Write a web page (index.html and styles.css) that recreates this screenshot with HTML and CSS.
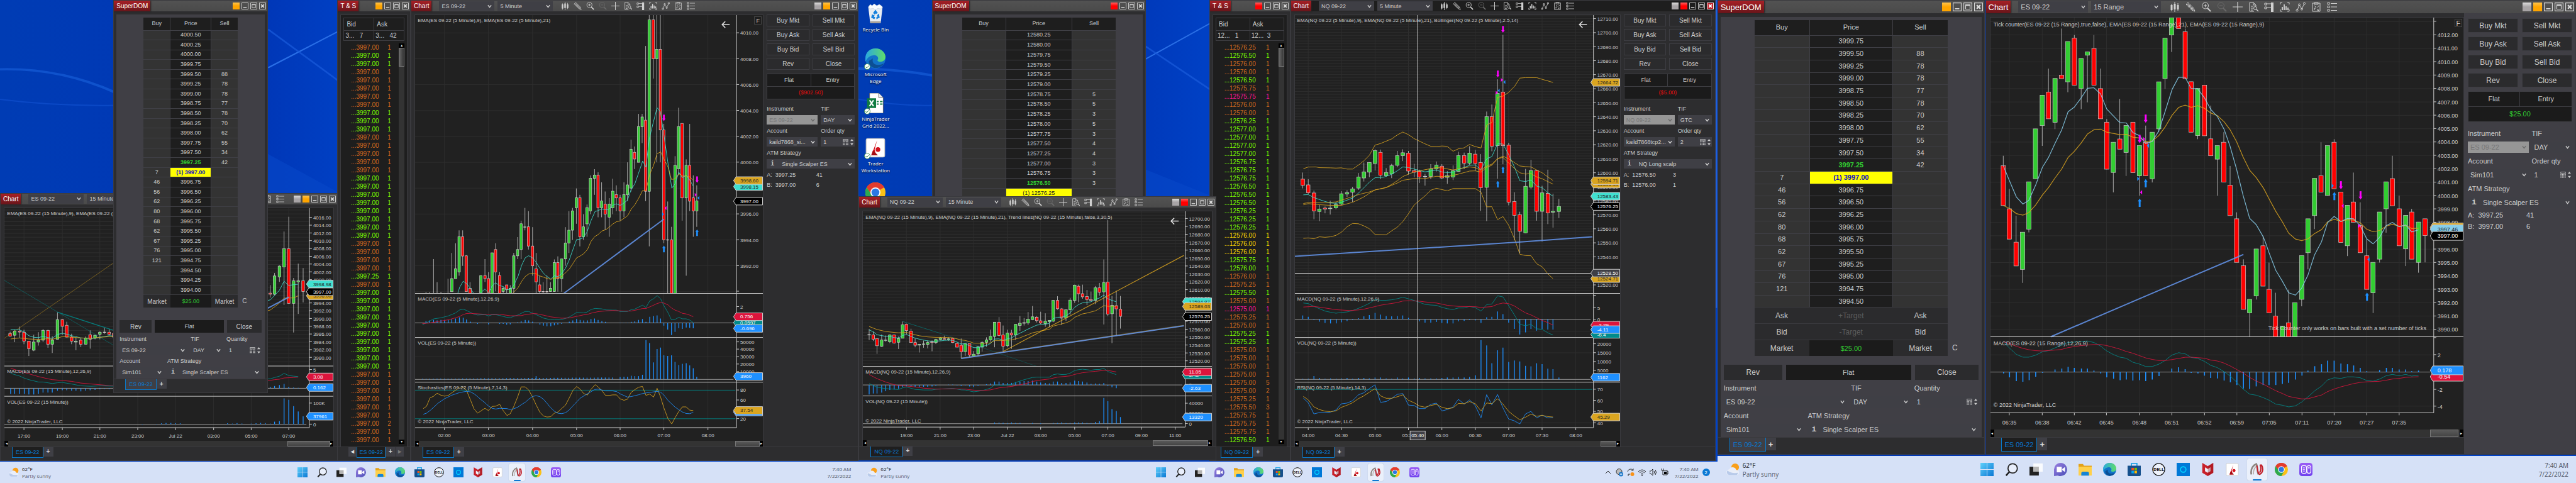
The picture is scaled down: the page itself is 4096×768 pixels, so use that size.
FILE: index.html
```html
<!DOCTYPE html>
<html lang="en">
<head>
<meta charset="utf-8">
<title>Trading desktop</title>
<link rel="stylesheet" href="styles.css">
</head>
<body>
<svg class="defs" aria-hidden="true">
  <defs>
    <linearGradient id="g-win" x1="0" y1="0" x2="1" y2="1"><stop offset="0" stop-color="#5fd0fb"/><stop offset="1" stop-color="#0a78d4"/></linearGradient>
    <linearGradient id="g-edge" x1="0" y1="0" x2="1" y2="0"><stop offset="0" stop-color="#2aa8e0"/><stop offset="1" stop-color="#5fdc6a"/></linearGradient>
    <linearGradient id="g-chat" x1="0" y1="0" x2="1" y2="1"><stop offset="0" stop-color="#9a7fe0"/><stop offset="1" stop-color="#4b50b8"/></linearGradient>
    <linearGradient id="g-app" x1="0" y1="0" x2="0" y2="1"><stop offset="0" stop-color="#9a5cf5"/><stop offset="1" stop-color="#6f42ee"/></linearGradient>
    <linearGradient id="g-streak" x1="0" y1="0" x2="1" y2="0"><stop offset="0" stop-color="#2f78f0" stop-opacity="0.9"/><stop offset="1" stop-color="#2f78f0" stop-opacity="0.25"/></linearGradient>
  </defs>
  <symbol id="i-candles" viewBox="0 0 16 16"><path d="M3 3v12M8 0v16M13 2v12" stroke="currentColor"/><path d="M1.500 5h3v8h-3zM6.500 3h3v9h-3zM11.500 5h3v7h-3z" fill="currentColor"/></symbol>
  <symbol id="i-pencil" viewBox="0 0 16 16"><path d="M2 3l2-2 9 9 2 5-5-2-9-9zM4 3l9 9M3 4l9 9" fill="none" stroke="currentColor"/></symbol>
  <symbol id="i-zoomin" viewBox="0 0 16 16"><circle cx="6.500" cy="6" r="5" fill="none" stroke="currentColor"/><path d="M4 6h5M6.500 3.500v5" stroke="currentColor"/><path d="M10 10l5 5" stroke="currentColor" stroke-width="2"/></symbol>
  <symbol id="i-zoomout" viewBox="0 0 16 16"><circle cx="6.500" cy="6" r="5" fill="none" stroke="currentColor"/><path d="M4 6h5" stroke="currentColor"/><path d="M10 10l5 5" stroke="currentColor" stroke-width="2"/></symbol>
  <symbol id="i-cross" viewBox="0 0 16 16"><path d="M0 8h16M8 0v16" stroke="currentColor" stroke-width="1.200"/></symbol>
  <symbol id="i-doc" viewBox="0 0 16 16"><path d="M9 15H2V1h6l4 4v2M8 1v4h4M4 7h4M4 10h3M4 13h3" fill="none" stroke="currentColor"/><circle cx="11" cy="10" r="2.500" fill="none" stroke="currentColor"/><path d="M13 12l3 3" stroke="currentColor" stroke-width="1.500"/></symbol>
  <symbol id="i-trader" viewBox="0 0 16 16"><path d="M1 2h3v3H1zM1 8h3v3H1zM4 3h7M4 9h7" fill="none" stroke="currentColor"/><path d="M11 1h4v15h-4z" fill="currentColor"/></symbol>
  <symbol id="i-bars" viewBox="0 0 16 16"><path d="M4 1H1v3M12 1h3v3M4 15H1v-3M12 15h3v-3" fill="none" stroke="currentColor"/><path d="M4 13V8M7 13V4M10 13V7M13 13V9" stroke="currentColor" stroke-width="1.800"/></symbol>
  <symbol id="i-zig" viewBox="0 0 16 16"><path d="M3 13L6 5l4 6 4-8" fill="none" stroke="currentColor"/><circle cx="2.500" cy="13.500" r="1.500" fill="none" stroke="currentColor"/><circle cx="6" cy="4.500" r="1.500" fill="none" stroke="currentColor"/><circle cx="10" cy="11.500" r="1.500" fill="none" stroke="currentColor"/><circle cx="14" cy="2.500" r="1.500" fill="none" stroke="currentColor"/></symbol>
  <symbol id="i-clip" viewBox="0 0 16 16"><path d="M2 2h12v13H2zM5 1h6v3H5zM5 6l3 3M10 9l2-3M5 13v-3h2M9 11l3 3M12 11l-3 3" fill="none" stroke="currentColor"/></symbol>
  <symbol id="i-list" viewBox="0 0 16 16"><path d="M1 1h3v3H1zM1 6.500h3v3H1zM1 12h3v3H1zM6 2.500h10M6 8h10M6 13.500h10" fill="none" stroke="currentColor"/></symbol>
  <symbol id="i-min" viewBox="0 0 12 12"><path d="M.5.5h11v11H.5z" fill="none" stroke="currentColor"/><path d="M3 8.500h6" stroke="currentColor" stroke-width="1.500"/></symbol>
  <symbol id="i-max" viewBox="0 0 12 12"><path d="M.5.5h11v11H.5zM3 3h6v6H3zM3 4h6" fill="none" stroke="currentColor"/></symbol>
  <symbol id="i-close" viewBox="0 0 12 12"><path d="M.5.5h11v11H.5z" fill="none" stroke="currentColor"/><path d="M3.500 3.500l5 5M8.500 3.500l-5 5" stroke="currentColor" stroke-width="2"/></symbol>
  <symbol id="i-chev" viewBox="0 0 8 6"><path d="M1 1l3 4 3-4" fill="none" stroke="currentColor" stroke-width="1.500"/></symbol>
  <symbol id="i-calc" viewBox="0 0 10 12"><path d="M.5.5h9v3h-9z" fill="none" stroke="currentColor"/><path d="M0 5.500h10M0 8h10M0 10.500h10" stroke="currentColor" stroke-width="1.800" stroke-dasharray="1.600 1.200"/></symbol>
  <symbol id="i-spin" viewBox="0 0 6 12"><path d="M0 4l3-4 3 4zM0 8l3 4 3-4z" fill="currentColor"/></symbol>

  <symbol id="t-start" viewBox="0 0 24 24"><path d="M0 0h11.500v11.500H0zM12.500 0H24v11.500H12.500zM0 12.500h11.500V24H0zM12.500 12.500H24V24H12.500z" fill="url(#g-win)"/></symbol>
  <symbol id="t-search" viewBox="0 0 24 24"><circle cx="14" cy="10" r="8.500" fill="#e8eefb" stroke="#222" stroke-width="2"/><path d="M8 16.500L2 23" stroke="#222" stroke-width="3"/></symbol>
  <symbol id="t-view" viewBox="0 0 24 24"><path d="M0 7h17v16H0z" fill="#222"/><path d="M7 1h17v15H7z" fill="#fff" opacity=".85"/><path d="M7 7h10v9H7z" fill="#b5b5b5"/></symbol>
  <symbol id="t-chat" viewBox="0 0 24 24"><path d="M12 0a12 12 0 1 1-5 23L0 24V12A12 12 0 0 1 12 0z" fill="url(#g-chat)"/><path d="M5 7h9v10H5zM15 11l5-3.500v9L15 13z" fill="#fff"/></symbol>
  <symbol id="t-folder" viewBox="0 0 24 24"><path d="M0 2h8l2 3h14v17H0z" fill="#e3a21a"/><path d="M0 7h24v16H0z" fill="#ffd04a"/><path d="M5 23v-4q0-3 3-3h8q3 0 3 3v4z" fill="#1584d6"/></symbol>
  <symbol id="t-edge" viewBox="0 0 24 24"><circle cx="12" cy="12" r="12" fill="#1273c8"/><path d="M0 12C0 4 6 0 12 0c8 0 12 6 12 10 0 4-3 6-6 6-4 0-4-2-3-3 1-2-1-5-4-5-5 0-9 3-11 8z" fill="url(#g-edge)"/><path d="M9 12c-2 6 4 10 13 6-5 8-18 7-18-3z" fill="#0c4f94"/></symbol>
  <symbol id="t-store" viewBox="0 0 24 24"><path d="M7 6V1h10v5" fill="none" stroke="#22a5e8" stroke-width="2"/><path d="M0 5h24v16q0 3-3 3H3q-3 0-3-3z" fill="#16508c"/><path d="M7 9h4.500v4.500H7z" fill="#f25022"/><path d="M12.500 9H17v4.500h-4.500z" fill="#7fba00"/><path d="M7 14.500h4.500V19H7z" fill="#00a4ef"/><path d="M12.500 14.500H17V19h-4.500z" fill="#ffb900"/></symbol>
  <symbol id="t-dell" viewBox="0 0 24 24"><circle cx="12" cy="12" r="11" fill="#eef2fb" stroke="#111" stroke-width="1.500"/><text x="12" y="15" text-anchor="middle" font-size="8" font-weight="700" fill="#111">DELL</text></symbol>
  <symbol id="t-alexa" viewBox="0 0 24 24"><path d="M0 0h24v24H0z" fill="#0078d7"/><circle cx="12" cy="12" r="5" fill="none" stroke="#00d5ff" stroke-width="1.800"/></symbol>
  <symbol id="t-mcafee" viewBox="0 0 24 24"><path d="M2 0l10 6 10-6v18l-10 6-10-6z" fill="#c8202a"/><path d="M7 8l5 3 5-3v7l-5 3-5-3z" fill="#eef2fb"/><path d="M12 6v18l10-6V0z" fill="#8d1218" opacity=".35"/></symbol>
  <symbol id="t-ib" viewBox="0 0 24 24"><rect x="1" y="1" width="22" height="22" rx="2" fill="#fff" stroke="#ccc"/><path d="M14 3L7 21h6l-2-7z" fill="#d2101a"/><path d="M9 15l6 6h-8z" fill="#a50d14"/><circle cx="15" cy="14" r="2.800" fill="#d2101a"/></symbol>
  <symbol id="t-ninja" viewBox="0 0 24 24"><path d="M2 21C0 10 6 4 11 2c3 5 1 14 4 19" fill="none" stroke="#8d8681" stroke-width="3"/><path d="M6 21C5 13 8 9 11 6" fill="none" stroke="#b9b2ac" stroke-width="2"/><path d="M12 5c2 10 2 15 5 16 7-3 7-12 3-18M18 3c2 6 2 11-1 15" fill="none" stroke="#c2202a" stroke-width="2.400"/></symbol>
  <symbol id="t-chrome" viewBox="0 0 24 24"><circle cx="12" cy="12" r="12" fill="#fbc116"/><path d="M12 12L1.600 6A12 12 0 0 1 22.400 6z" fill="#e33b2e"/><path d="M12 6h10.400A12 12 0 0 0 1.600 6L6 13z" fill="#e33b2e"/><path d="M1.600 6A12 12 0 0 0 12 24l5-9-10-1z" fill="#2da94f"/><circle cx="12" cy="12" r="6" fill="#fff"/><circle cx="12" cy="12" r="4.700" fill="#2c78e4"/></symbol>
  <symbol id="t-app" viewBox="0 0 24 24"><rect width="24" height="24" rx="5" fill="url(#g-app)"/><rect x="4" y="5" width="9" height="14" rx="3" fill="none" stroke="#fff" stroke-width="1.300"/><rect x="14" y="5" width="7" height="14" rx="3.500" fill="none" stroke="#fff" stroke-width="1.300"/><path d="M6.500 9h4M6.500 12h4M6.500 15h4" stroke="#fff" stroke-width="1.500" stroke-dasharray="1.200 1"/><circle cx="17.500" cy="9" r="1.300" fill="#fff"/></symbol>
  <symbol id="t-weather" viewBox="0 0 24 24"><circle cx="16" cy="8" r="7" fill="#f9a01b"/><path d="M5 22a5 5 0 0 1 0-10 7 7 0 0 1 13 1 4.500 4.500 0 0 1 1 9z" fill="#e9eef9"/><path d="M5 22a5 5 0 0 1-3-8q8 6 19 4a5 5 0 0 1-2 4z" fill="#b9cbea"/></symbol>
  <symbol id="d-bin" viewBox="0 0 24 31"><path d="M1 5l3 25h16l3-25z" fill="#e8edf3"/><path d="M1 5l3-4 3 2 3-3 4 3 4-2 3 2 2 2-3 3-4-1-4 2-4-2-4 1z" fill="#fafcff" stroke="#bcc6d2" stroke-width=".5"/><path d="M4 27h16l-.4 3H4.400z" fill="#a9a29a"/><path d="M9 14l3-4 3 4-2 1-1-1-1 2zM17 16l1 5-4 2v-2l2-1-1-2zM7 17l-1 4 4 2 1-2-2-1 1-2z" fill="#1680dd" stroke="#1680dd"/></symbol>
  <symbol id="d-excel" viewBox="0 0 26 31"><path d="M4 0h14l7 7v24H4z" fill="#fff" stroke="#444" stroke-width=".7"/><path d="M18 0v7h7" fill="#eee" stroke="#444" stroke-width=".7"/><path d="M15 12h3v2h-3zM20 12h4v2h-4zM15 16h3v2h-3zM20 16h4v2h-4z" fill="#107c41"/><path d="M0 8h14v15H0z" fill="#107c41"/><path d="M4 11l6 9M10 11l-6 9" stroke="#fff" stroke-width="2"/></symbol>
  <symbol id="d-check" viewBox="0 0 12 12"><circle cx="6" cy="6" r="5.400" fill="#fff" stroke="#2b8a3e"/><path d="M3 6l2 2.500L9 4" fill="none" stroke="#2b8a3e" stroke-width="1.200"/></symbol>
</svg>

<main class="desktop">
  <section class="monitor">
    <svg class="wallpaper" viewBox="0 0 3136 3136" preserveAspectRatio="none" aria-hidden="true">
      <path d="M0 450Q220 440 420 600" fill="none" stroke="#0f52cc" stroke-width="14"/>
      <path d="M0 645Q200 690 420 684" fill="none" stroke="#0b49c6" stroke-width="8"/>
      <path d="M979 440L1240 200" stroke="#2a6fe6" stroke-width="7"/>
      <path d="M979 190L1240 530" stroke="#1a5cdc" stroke-width="8" opacity=".7"/>
      <path d="M979 1000L1240 1253H979z" fill="#0648c8" opacity=".6"/>
    </svg>
    <article class="window win-chart-a">
      <header class="titlebar" data-bar="Chart|ES 09-22|15 Minute|orange"></header>
      <div class="workspace"><div class="pane"><svg class="chart" data-chart="A" role="img" aria-label="ES 09-22 15 minute chart"></svg><div class="hscroll" data-thumb="86 99"></div></div></div>
      <nav class="tabs tabs-chart"><a class="tab tab-dark" href="#es15">ES 09-22</a><button class="tab-add">+</button></nav>
    </article>
    <article class="window win-dom-a">
      <header class="titlebar" data-bar="SuperDOM|||orange"></header>
      <div class="dom" data-dom="one"></div>
      <nav class="tabs tabs-dom"><a class="tab" href="#dom1">ES 09-22</a><button class="tab-add">+</button></nav>
    </article>
    <article class="window win-tape-a">
      <header class="titlebar" data-bar="T &amp; S|||orange"></header>
      <div class="tape" data-tape="ES"></div>
      <nav class="tabs tabs-tape"><button class="tab-nav" aria-label="Previous tab">◂</button><a class="tab tab-dark" href="#ts1">ES 09-22</a><button class="tab-add">+</button><button class="tab-nav dim" aria-label="Next tab">▸</button></nav>
    </article>
    <article class="window win-chart-b">
      <header class="titlebar" data-bar="Chart|ES 09-22|5 Minute|orange"></header>
      <div class="workspace"><div class="pane"><svg class="chart" data-chart="B" role="img" aria-label="ES 09-22 5 minute chart"></svg><button class="fixed-scale">F</button><div class="hscroll" data-thumb="92 99"></div></div>
        <aside class="order" data-order="ES 09-22|DAY|kaild7868_si...|1|Single Scalper ES|($902.50)|loss|3997.25|41|3997.00|6"></aside></div>
      <nav class="tabs tabs-chart"><a class="tab tab-dark" href="#es5">ES 09-22</a><button class="tab-add">+</button></nav>
    </article>
    <footer class="taskbar"></footer>
  </section>

  <section class="monitor">
    <svg class="wallpaper" viewBox="0 0 3136 3136" preserveAspectRatio="none" aria-hidden="true">
      <path d="M0 445Q150 450 270 490" fill="none" stroke="#0f52cc" stroke-width="16"/>
      <path d="M0 645Q150 690 270 684" fill="none" stroke="#0b49c6" stroke-width="8"/>
      <path d="M1040 392L1290 146" stroke="#2a6fe6" stroke-width="7"/>
      <path d="M1040 290L1290 588" stroke="#1a5cdc" stroke-width="8" opacity=".7"/>
      <path d="M1049 1100L1290 1273H1049z" fill="#0648c8" opacity=".6"/>
      <path d="M3120 0h16v2000h-16z" fill="#1d5fe0"/>
    </svg>
    <ul class="shortcuts">
      <li><a href="#bin"><svg class="sc-icon"><use href="#d-bin"/></svg>Recycle Bin</a></li>
      <li><a href="#edge"><svg class="sc-icon"><use href="#t-edge"/></svg><svg class="sc-check"><use href="#d-check"/></svg>Microsoft Edge</a></li>
      <li><a href="#grid"><svg class="sc-icon"><use href="#d-excel"/></svg><svg class="sc-check"><use href="#d-check"/></svg>NinjaTrader Grid 2022...</a></li>
      <li><a href="#tws"><svg class="sc-icon"><use href="#t-ib"/></svg><svg class="sc-check"><use href="#d-check"/></svg>Trader Workstation</a></li>
      <li><a href="#chrome" aria-label="Chrome"><svg class="sc-icon"><use href="#t-chrome"/></svg></a></li>
    </ul>
    <article class="window win-dom-b">
      <header class="titlebar" data-bar="SuperDOM|||red"></header>
      <div class="dom dom-open" data-dom="two"></div>
    </article>
    <article class="window win-tape-b">
      <header class="titlebar" data-bar="T &amp; S|||red"></header>
      <div class="tape" data-tape="NQ"></div>
      <nav class="tabs tabs-tape"><a class="tab tab-dark" href="#ts2">NQ 09-22</a><button class="tab-add">+</button></nav>
    </article>
    <article class="window win-chart-c">
      <header class="titlebar" data-bar="Chart|NQ 09-22|15 Minute|red"></header>
      <div class="workspace"><div class="pane"><svg class="chart" data-chart="C" role="img" aria-label="NQ 09-22 15 minute chart"></svg><div class="hscroll" data-thumb="83 99"></div></div></div>
      <nav class="tabs tabs-chart"><a class="tab tab-dark" href="#nq15">NQ 09-22</a><button class="tab-add">+</button></nav>
    </article>
    <article class="window win-chart-d active">
      <header class="titlebar" data-bar="Chart|NQ 09-22|5 Minute|red"></header>
      <div class="workspace"><div class="pane"><svg class="chart" data-chart="D" role="img" aria-label="NQ 09-22 5 minute chart"></svg><div class="hscroll" data-thumb="94 99"></div></div>
        <aside class="order" data-order="NQ 09-22|GTC|kaild7868tcp2...|2|NQ Long scalp|($5.00)|loss|12576.50|3|12576.00|1"></aside></div>
      <nav class="tabs tabs-chart"><a class="tab tab-dark" href="#nq5">NQ 09-22</a><button class="tab-add">+</button></nav>
    </article>
    <footer class="taskbar" data-tray="yes"></footer>
  </section>

  <section class="monitor monitor-large">
    <article class="window win-dom-c">
      <header class="titlebar" data-bar="SuperDOM|||orange"></header>
      <div class="dom" data-dom="three"></div>
      <nav class="tabs tabs-dom"><a class="tab" href="#dom3">ES 09-22</a><button class="tab-add">+</button></nav>
    </article>
    <article class="window win-chart-e">
      <header class="titlebar" data-bar="Chart|ES 09-22|15 Range|orange"></header>
      <div class="workspace"><div class="chart-side"><div class="pane"><svg class="chart" data-chart="E" role="img" aria-label="ES 09-22 15 range chart"></svg><button class="fixed-scale">F</button><div class="hscroll" data-thumb="93 99"></div></div>
        <nav class="tabs tabs-chart"><a class="tab tab-dark" href="#es15r">ES 09-22</a><button class="tab-add">+</button></nav></div>
        <aside class="order" data-order="ES 09-22|DAY|Sim101|1|Single Scalper ES|$25.00|gain|3997.25|41|3997.00|6"></aside></div>
    </article>
    <footer class="taskbar"></footer>
  </section>
</main>
<script src="app.js"></script>
</body>
</html>
```
FILE: styles.css
```css
* { box-sizing: border-box; }
html, body { height: 100%; margin: 0; }
body { font-family: "Liberation Sans", Arial, sans-serif; color: #ccc; overflow: hidden; background: #0038b8; }
button, input, select { font: inherit; color: inherit; margin: 0; padding: 0; border: 0; background: none; }
a { color: inherit; text-decoration: none; }
.defs { position: absolute; width: 0; height: 0; }

.desktop { display: flex; height: 100vh; min-height: 768px; }
.monitor {
  --fs-title: 10px; --fs-btn: 10px; --fs: 9px; --fs-chart: 8px; --fs-sys: 8px;
  --bar: 17px; --top: 5px; --side: 5px; --gap: 5px; --row-gap: 4px; --line: 12px; --combo: 15px;
  --btn: 19px; --flat: 20px; --order: 150px; --gutter: 43px; --head: 20px; --foot: 21px; --lead: 20px;
  --tab: 17px; --tab-rest: 5px; --task: 34px; --cell: 31px; --icon: 16px; --wbtn: 11px; --combo-w: 88px; --tool: 20px; --tool-icon: 13px;
  position: relative; flex: 1; min-width: 0; display: flex; flex-direction: column; overflow: hidden;
  background: linear-gradient(90deg, #003cb4 0%, #0036b6 30%, #0040c4 40%, #0042c8 100%);
}
.monitor-large {
  --fs-title: 13px; --fs-btn: 12px; --fs: 11px; --fs-chart: 9px; --fs-sys: 10px;
  --bar: 20px; --top: 6px; --side: 6px; --gap: 6px; --row-gap: 6px; --line: 14px; --combo: 18px;
  --btn: 23px; --flat: 24px; --order: 177px; --gutter: 54px; --head: 24px; --foot: 26px; --lead: 14px;
  --tab: 22px; --tab-rest: 5px; --task: 43px; --cell: 39px; --icon: 21px; --wbtn: 14px; --combo-w: 111px; --tool: 25px; --tool-icon: 16px;
}
.wallpaper { position: absolute; width: 100%; height: 100%; }

/* windows */
.window { position: absolute; top: 0; display: flex; flex-direction: column; background: #2d2d2f; border: 1px solid #3a3a3e; overflow: hidden; }
.win-chart-a { left: 0; width: 39.32%; top: 39.96%; height: 55.45%; }
.win-dom-a { left: 13.2%; width: 18.02%; height: 81.44%; }
.win-tape-a { left: 39.29%; width: 8.55%; height: 95.4%; }
.win-chart-b { left: 47.83%; width: 52.17%; height: 95.5%; }
.win-dom-b { left: 8.51%; width: 24.94%; height: 41.1%; }
.win-tape-b { left: 40.85%; width: 9.41%; height: 95.5%; }
.win-chart-c { left: 0; width: 41.65%; top: 40.56%; height: 54.75%; }
.win-chart-d { left: 50.26%; width: 49.52%; height: 95.5%; }
.win-dom-c { left: 0; width: 31.15%; height: 94.2%; }
.win-chart-e { left: 31.19%; width: 68.81%; height: 94.2%; }

.titlebar { flex: none; height: var(--bar); display: flex; align-items: center; background: linear-gradient(#525252, #4a4a4a); padding-right: 2px; }
.active .titlebar { background: #1e1e1e; }
.badge { align-self: stretch; display: flex; align-items: center; padding: 0 4px; margin: 0 auto 0 0; font-size: var(--fs-title); font-weight: 400; color: #fff; background: linear-gradient(#a82026, #68151a); box-shadow: 1px 0 2px #222; white-space: nowrap; }
.has-tools .badge { margin-right: 12px; }
.has-tools .combo { flex: none; width: var(--combo-w); margin-right: 5px; }
.tools { display: flex; margin: 0 auto 0 4px; }
.tool { width: var(--tool); height: var(--tool-icon); display: grid; place-items: center; color: #d0d0d0; }
.tool svg { width: var(--tool-icon); height: var(--tool-icon); }
.tool.dim { color: #6a6a6a; }
.wbtns { display: flex; gap: 3px; }
.wbtn { width: var(--wbtn); height: var(--wbtn); display: block; color: #d8d8d8; }
.wbtn svg { display: block; width: 100%; height: 100%; }
.wbtn-grey { background: linear-gradient(#ddd, #a8a4a6 50%); }
.wbtn-orange { background: linear-gradient(#ffc34d, #ffa500 50%); }
.wbtn-red { background: linear-gradient(#ff6060, #f00 50%); }
.active .wbtn:last-child { background: #c0202a; color: #fff; }

.combo { position: relative; display: block; height: var(--combo); background: #3f3f45; font-size: var(--fs); }
.combo select, .combo input { appearance: none; display: block; width: 100%; height: 100%; padding: 0 12px 0 4px; outline: 0; text-overflow: ellipsis; }
.combo .chev { position: absolute; right: 4px; top: calc(50% - 3px); width: 7px; height: 6px; pointer-events: none; }
.combo-off { background: #969696; color: #6c6c6c; }
.combo-info select { padding-left: 24px; }
.combo-info b { position: absolute; left: 6px; top: 0; line-height: var(--combo); font: 700 var(--fs-title)/var(--combo) "Liberation Mono", monospace; }
.combo .calc { position: absolute; right: 10px; top: calc(50% - 5px); width: 9px; height: 10px; }
.combo .spin { position: absolute; right: 2px; top: calc(50% - 5px); width: 5px; height: 10px; }

.workspace { flex: 1; min-height: 0; display: flex; padding: var(--top) 0 0 var(--side); }
.pane { position: relative; flex: 1; min-width: 0; min-height: 0; display: flex; flex-direction: column; background: #212121; border: 1px solid #3a3a3e; border-bottom: 0; }
.win-chart-a .pane, .win-chart-c .pane { margin-right: 5px; }
.chart-side { flex: 1; min-width: 0; display: flex; flex-direction: column; }
.chart { flex: 1; min-height: 0; width: 100%; display: block; font-size: var(--fs-chart); }
.fixed-scale { position: absolute; right: 2px; top: 2px; width: 12px; height: 13px; border: 1px solid #444; background: #1e1e1e; font-size: var(--fs); }
.hscroll { flex: none; position: relative; height: 10px; background: #333; border-bottom: 1px solid #3a3a3e; display: flex; justify-content: space-between; font-size: 6px; line-height: 9px; color: #fff; }
.hscroll span { width: 6px; background: #000; text-align: center; }
.hscroll i { position: absolute; top: 0; bottom: 0; background: linear-gradient(#5a5a5a, #444); border: 1px solid #777; }
.monitor-large .hscroll { height: 13px; line-height: 12px; }

.tabs { flex: none; display: flex; align-items: flex-start; height: calc(var(--tab) + var(--tab-rest)); border-top: 1px solid #3a3a3e; margin-top: -1px; }
.tabs-chart, .tabs-dom { padding-left: 18px; }
.tabs-tape { padding-left: 17px; }
.tab { position: relative; height: var(--tab); padding: 0 5px; display: flex; align-items: center; border: 1px solid #0a78c8; border-top: 0; color: #0a78d0; background: #3f3f45; font-size: var(--fs); }
.tab-dark { background: #1e1e1e; }
.tab-add, .tab-nav { width: 16px; height: calc(var(--tab) - 2px); background: #3f3f45; color: #ddd; font-size: var(--fs-title); font-weight: 700; line-height: 1; }
.tab-nav { width: 12px; margin-right: 1px; }
.tab-nav.dim { color: #777; margin-left: 1px; }
.win-tape-a .tab { padding: 0 3px; }

/* order entry column */
.order { flex: none; width: var(--order); padding: 0 5px 0 5px; font-size: var(--fs); }
.monitor-large .order { background: #403f45; margin-top: -6px; padding: 8px 5px 0 6px; }
.order-grid { display: grid; grid-template-columns: 1fr 1fr; gap: var(--row-gap) var(--gap); }
.order-grid button { height: var(--btn); border: 1px solid #3d3d42; background: #2b2b2d; font-size: var(--fs-btn); }
.position { display: grid; grid-template-columns: 1fr 1fr; gap: 1px; margin-top: 6px; background: #3d3d42; border: 1px solid #3d3d42; text-align: center; line-height: calc(var(--flat) - 1px); }
.position span { background: #1b1b1b; }
.position .pnl { grid-column: 1 / 3; }
.loss { color: #e80c0c; }
.gain { color: #32cd32; }
.fields { display: grid; grid-template-columns: 60fr 40fr; column-gap: 5px; padding-top: 5px; }
.field { display: block; line-height: var(--line); padding-top: var(--row-gap); min-width: 0; white-space: nowrap; }
.field .combo { margin-top: var(--row-gap); line-height: normal; }
.wide { grid-column: 1 / -1; }
.quotes { display: grid; grid-template-columns: 56fr 44fr; margin: 2px 0 0; line-height: calc(var(--line) + 4px); }
.quotes span { white-space: pre; }

/* price ladder */
.dom { flex: 1; min-height: 0; display: flex; flex-direction: column; margin: var(--top) 4px 0; padding: 5px 5px 4px; background: #403f45; font-size: var(--fs); }
.dom-open { padding-bottom: 0; }
.ladder-box { flex: 1; min-height: 0; margin: 0 calc(var(--gutter) - 5px); }
.ladder { width: 100%; height: 100%; table-layout: fixed; border-collapse: collapse; text-align: center; line-height: 1; }
.ladder th { height: var(--head); background: #1e1e1e; font-weight: 400; border-right: 1px solid #403f45; }
.ladder td, .ladder th { padding: 0; }
.ladder td { background: #333; border-top: 1px solid #3f3f45; border-right: 1px solid #3f3f45; }
.ladder td:last-child, .ladder th:last-child { border-right: 0; }
.ladder .price { background: #1e1e1e; width: 43%; }
.ladder .best { color: #32cd32; font-weight: 700; }
.ladder .last { background: #ff0; color: #1010c0; font-weight: 700; }
.ladder .last-dark { background: #ff0; color: #222; }
.ladder-foot { flex: none; display: grid; grid-template-columns: 28fr 43fr 28fr calc(var(--gutter) - 5px); margin-left: calc(var(--gutter) - 5px); }
.ladder-foot > * { height: var(--foot); background: #2b2b2d; border-top: 1px solid #3a3a3e; display: grid; place-items: center; font-size: var(--fs-btn); text-align: center; }
.ladder-foot .pnl { background: #1b1b1b; font-size: var(--fs); }
.ladder-foot .off { color: #5c5c5c; }
.ladder-foot .clear { background: none; border: 0; justify-content: start; padding-left: 7px; }
.actions { flex: none; display: grid; grid-template-columns: 23fr 49fr 25fr; gap: var(--gap); margin-top: var(--lead); }
.actions > * { height: calc(var(--btn) + 1px); background: #2b2b2d; font-size: var(--fs-btn); display: grid; place-items: center; }
.actions .flat { background: #1b1b1b; font-size: var(--fs); }
.dom-fields { flex: none; display: grid; grid-template-columns: 50fr 24fr 26fr; column-gap: var(--gap); }
.dom-fields.two { grid-template-columns: 32fr 68fr; }

/* time & sales */
.tape { flex: 1; min-height: 0; margin: var(--top) 4px 0; padding: 4px 4px 0; background: #1e1e1e; border: 1px solid #3a3a3e; overflow: hidden; }
.inside { width: 100%; border-collapse: collapse; font-size: var(--fs-btn); margin-bottom: 4px; }
.inside th, .inside td { border: 1px solid #3d3d42; padding: 0 4px; font-weight: 400; text-align: left; width: 50%; }
.inside th { height: 20px; }
.inside td { height: 16px; padding: 0 2px; white-space: pre; }
.tape-body { display: flex; }
.prints { flex: 1; border-collapse: collapse; font-size: 10px; line-height: 13px; text-align: right; }
.prints td { padding: 0; height: 13px; }
.prints td:first-child { width: 64%; }
.prints td:nth-child(2) { width: 22%; }
.p-o { color: #d2691e; }
.p-g { color: #7cfc00; }
.p-m { color: #ff1493; }
.p-y { color: #ffd700; }
.vscroll { width: 9px; background: #333; display: flex; flex-direction: column; font-size: 5px; line-height: 7px; text-align: center; color: #fff; }
.vscroll span { background: #000; height: 7px; }
.vscroll i { flex: none; height: 30px; background: linear-gradient(90deg, #666, #333); border: 1px solid #777; margin-bottom: auto; }

/* chart drawing */
.chart text { fill: #ccc; }
.chart .tag-light { fill: #fff; }
.chart .tag-dark { fill: #222; }

/* taskbar */
.taskbar { position: relative; flex: none; height: var(--task); margin-top: auto; display: grid; grid-template-columns: 1fr auto 1fr; align-items: center; background: #d6e1f7; color: #222; font: var(--fs-sys)/1.4 "Open Sans", "Noto Sans", sans-serif; }
.weather { display: flex; align-items: center; gap: 5px; padding-left: 14px; }
.weather svg { width: var(--icon); height: var(--icon); }
.weather small { display: block; font-size: inherit; color: #5a6270; }
.apps { display: flex; height: 100%; }
.app { position: relative; width: var(--cell); display: grid; place-items: center; }
.app svg { width: var(--icon); height: var(--icon); }
.app.on::before { content: ""; position: absolute; inset: 10% 9%; background: #eaf0fb; border-radius: 3px; box-shadow: 0 0 1px #9ab; }
.app.on::after { content: ""; position: absolute; bottom: 10%; width: 36%; height: 2px; border-radius: 1px; background: #0a78d4; }
.app.on svg { position: relative; }
.status { justify-self: end; display: flex; align-items: center; gap: 6px; padding-right: 12px; text-align: right; color: #4a5260; }
.status svg { width: 12px; height: 16px; }
.status .clock { margin-left: 4px; }
.status .count { width: 12px; height: 12px; border-radius: 50%; background: #0a78d4; color: #fff; text-align: center; line-height: 12px; }

/* shortcuts */
.shortcuts { position: absolute; left: 0; top: 0; width: 54px; margin: 0; padding: 6px 0 0; list-style: none; font: 8px/11px "Open Sans", "Noto Sans", sans-serif; color: #fff; text-align: center; text-shadow: 0 1px 2px #000; }
.shortcuts li { height: 71px; }
.shortcuts a { position: relative; display: block; }
.sc-icon { display: block; width: 32px; height: 32px; margin: 0 auto 3px; }
.sc-check { position: absolute; left: 9px; top: 24px; width: 10px; height: 10px; }
```
FILE: app.js
```js
/* ---------- small builders ---------- */
const use = (id, cls = '') => `<svg class="${cls}" aria-hidden="true"><use href="#${id}"/></svg>`;
const all = (sel, fn) => document.querySelectorAll(sel).forEach(fn);
const combo = (v, label, cls = '') => `<span class="combo ${cls}">${cls.includes('info') ? '<b>i</b>' : ''}<select aria-label="${label}"${cls.includes('off') ? ' disabled' : ''}><option>${v}</option></select>${use('i-chev', 'chev')}</span>`;
const field = (label, v, cls = '', wrap = '') => `<label class="field ${wrap}">${label}${combo(v, label, cls)}</label>`;
const qty = (label, v) => `<label class="field">${label}<span class="combo"><input value="${v}" inputmode="numeric" aria-label="${label}">${use('i-calc', 'calc')}${use('i-spin', 'spin')}</span></label>`;

const TOOLS = ['candles', 'pencil', 'zoomin', 'zoomout', 'cross', 'doc', 'trader', 'bars', 'zig', 'clip', 'list'];
all('[data-bar]', el => {
  const [name, sym, span, link] = el.dataset.bar.split('|');
  let html = `<h2 class="badge">${name.replace('&', '&amp;')}</h2>`;
  if (sym) {
    el.classList.add('has-tools');
    html += combo(sym, 'Instrument') + combo(span, 'Interval') + '<div class="tools">' +
      TOOLS.map(t => `<button class="tool${t === 'zoomout' ? ' dim' : ''}" aria-label="${t}">${use('i-' + t)}</button>`).join('') + '</div>';
  }
  html += `<div class="wbtns">${sym ? '<button class="wbtn wbtn-grey" aria-label="Interval link"></button>' : ''}<button class="wbtn wbtn-${link}" aria-label="Instrument link"></button>` +
    ['min', 'max', 'close'].map(t => `<button class="wbtn" aria-label="${t}">${use('i-' + t)}</button>`).join('') + '</div>';
  el.innerHTML = html;
});

all('[data-order]', el => {
  const [sym, tif, acct, q, atm, pnl, cls, a, an, b, bn] = el.dataset.order.split('|');
  el.innerHTML = '<div class="order-grid">' +
    ['Buy Mkt', 'Sell Mkt', 'Buy Ask', 'Sell Ask', 'Buy Bid', 'Sell Bid', 'Rev', 'Close'].map(t => `<button>${t}</button>`).join('') + '</div>' +
    `<div class="position"><span>Flat</span><span>Entry</span><span class="pnl ${cls}">${pnl}</span></div>` +
    `<div class="fields">${field('Instrument', sym, 'combo-off')}${field('TIF', tif)}${field('Account', acct)}${qty('Order qty', q)}${field('ATM Strategy', atm, 'combo-info', 'wide')}</div>` +
    `<div class="quotes"><span>A:  ${a}</span><span>${an}</span><span>B:  ${b}</span><span>${bn}</span></div>`;
});

/* ---------- ladders ---------- */
const DOMS = {
  one: { from: 4000.5, rows: 27, last: 3997, sells: { 4: 88, 5: 78, 6: 78, 7: 77, 8: 78, 9: 70, 10: 62, 11: 55, 12: 34, 13: 42 }, buys: { 14: 7, 15: 46, 16: 56, 17: 62, 18: 80, 19: 68, 20: 62, 21: 67, 22: 76, 23: 121 }, foot: 1 },
  two: { from: 12580.25, rows: 17, last: 12576.25, dark: 1, sells: { 6: 5, 7: 5, 8: 3, 9: 5, 10: 3, 11: 4, 12: 4, 13: 3, 14: 3, 15: 3 }, buys: {} },
  three: { from: 3999.75, rows: 22, last: 3997, sells: { 1: 88, 2: 78, 3: 78, 4: 77, 5: 78, 6: 70, 7: 62, 8: 55, 9: 34, 10: 42 }, buys: { 11: 7, 12: 46, 13: 56, 14: 62, 15: 80, 16: 68, 17: 62, 18: 67, 19: 76, 20: 121 }, foot: 3 }
};
all('[data-dom]', el => {
  const d = DOMS[el.dataset.dom];
  let rows = '';
  for (let i = 0; i < d.rows; i++) {
    const p = d.from - i * 0.25;
    const isLast = p === d.last;
    const cls = isLast ? (d.dark ? 'last-dark' : 'last') : p === d.last + 0.25 ? 'best' : '';
    rows += `<tr><td>${d.buys[i] || ''}</td><td class="price ${cls}">${isLast ? '(1) ' : ''}${p.toFixed(2)}</td><td>${d.sells[i] || ''}</td></tr>`;
  }
  let html = `<div class="ladder-box"><table class="ladder"><thead><tr><th>Buy</th><th class="price">Price</th><th>Sell</th></tr></thead><tbody>${rows}</tbody></table></div>`;
  if (d.foot) {
    html += '<div class="ladder-foot">';
    if (d.foot === 3) html += ['Ask', 'Bid'].map((t, i) => `<button>${t}</button><button class="off" disabled>${i ? '-' : '+'}Target</button><button>${t}</button><span class="clear"></span>`).join('');
    html += '<button>Market</button><span class="pnl gain">$25.00</span><button>Market</button><button class="clear">C</button></div>' +
      '<div class="actions"><button>Rev</button><span class="flat">Flat</span><button>Close</button></div>' +
      `<div class="dom-fields">${field('Instrument', 'ES 09-22')}${field('TIF', 'DAY')}${qty('Quantity', 1)}</div>` +
      `<div class="dom-fields two">${field('Account', 'Sim101')}${field('ATM Strategy', 'Single Scalper ES', 'combo-info')}</div>`;
  }
  el.innerHTML = html;
});

/* ---------- time & sales ---------- */
const ES = 'oggooooogggooooogggggggg' + 'oooo' + 'g' + 'o' + 'gggggggggg' + 'ooooooooo';
const TAPES = {
  ES: { bid: '3...   7', ask: '3...   42', rows: [...ES].map((c, i) => [c, i === 28 ? '3997.25' : '3997.00', i === 46 ? 2 : 1]) },
  NQ: { bid: '12...   1', ask: '12...  3', rows: ('o76.25 g76.50 o76.00 o76.00 g76.50 o75.75 m75.75 o76.00 o76.00 g76.25 g77.00 g77.00 g77.00 g77.00 g76.75 g76.75 g76.75 g76.50 g76.50 g76.50 g76.25 g76.25 g76.25 y76.00 y76.00 ' +
    'y76.00 g75.75 g76.00 o76.00 o75.25 g75.50 o75.00 m75.00 o75.25 o75.00 g75.25 g75.25 o75.00 o75.00 o75.00 o75.00 o75.00:5 o75.00:2 o75.25 o75.50:3 o75.75 o75.75 o75.75 g76.50').split(' ').map(s => [s[0], '125' + s.slice(1, 6), s.split(':')[1] || 1]) }
};
all('[data-tape]', el => {
  const t = TAPES[el.dataset.tape];
  el.innerHTML = `<table class="inside"><thead><tr><th>Bid</th><th>Ask</th></tr></thead><tbody><tr><td>${t.bid}</td><td>${t.ask}</td></tr></tbody></table>` +
    `<div class="tape-body"><table class="prints"><tbody>${t.rows.map(r => `<tr class="p-${r[0]}"><td>...${r[1]}</td><td>${r[2]}</td><td></td></tr>`).join('')}</tbody></table><div class="vscroll"><span>▲</span><i></i><span>▼</span></div></div>`;
});

all('[data-thumb]', el => {
  const [a, b] = el.dataset.thumb.split(' ').map(Number);
  el.innerHTML = `<span>◂</span><i style="left:${a}%;right:${100 - b}%"></i><span>▸</span>`;
});

/* ---------- taskbar ---------- */
const APPS = ['start', 'search', 'view', 'chat', 'folder', 'edge', 'store', 'dell', 'alexa', 'mcafee', 'ib', 'ninja', 'chrome', 'app'];
const TRAY = '<svg viewBox="0 0 12 16"><path d="M2 10l4-4 4 4" fill="none" stroke="#222"/></svg>' +
  '<svg viewBox="0 0 12 16"><circle cx="5.500" cy="7" r="4.500" fill="#bbb" stroke="#333"/><circle cx="8.500" cy="11" r="3.500" fill="#1273c8"/><path d="M8.500 9v4M6.500 11h4" stroke="#fff"/></svg>' +
  '<svg viewBox="0 0 12 16"><path d="M1 7a5 5 0 0 1 9-2M10 2v3H7M2 14v-3h3" fill="none" stroke="#333"/><circle cx="8.500" cy="11" r="3" fill="#f9931b"/></svg>' +
  '<svg viewBox="0 0 12 16"><path d="M0 7q6-6 12 0M2 9q4-4 8 0M4 11q2-2 4 0" fill="none" stroke="#222"/><circle cx="6" cy="12.500" r="1"/></svg>' +
  '<svg viewBox="0 0 12 16"><path d="M0 6h2l3-3v10l-3-3H0zM7 6q1.500 2 0 4M9 4q3 4 0 8" fill="none" stroke="#222"/></svg>' +
  '<svg viewBox="0 0 12 16"><path d="M3 5h7v7H3zM10 7h2v3h-2M1 2v3h3V2" fill="none" stroke="#222"/><path d="M5 7h4v4H5z"/></svg>';
all('.taskbar', el => {
  const tray = el.dataset.tray;
  el.innerHTML = `<div class="weather">${use('t-weather')}<div>62°F<small>Partly sunny</small></div></div>` +
    `<nav class="apps">${APPS.map(a => `<button class="app${a === 'ninja' ? ' on' : ''}" aria-label="${a}">${use('t-' + a)}</button>`).join('')}</nav>` +
    `<div class="status">${tray ? TRAY : ''}<div class="clock">7:40 AM<br>7/22/2022</div>${tray ? '<span class="count">2</span>' : ''}</div>`;
});

/* ---------- charts ---------- */
const C = { g: '#32cd32', r: '#ff0000', turq: '#40e0d0', gold: '#daa520', teal: '#008b8b', red: '#dc143c', blue: '#1e90ff', trend: '#6495ed', sky: '#87ceeb', mag: '#ff00ff', black: '#000000', grey: '#3f3f45' };
const R2 = 1568;
const seq = (a, step, n) => Array.from({ length: n }, (_, i) => a + i * step);
const prices = (start, dp, y, dy, n) => seq(0, 1, n).map(i => [(start - i * dp).toFixed(2), y + i * dy]);

const CHARTS = {
  A: {
    box: [12, -222, 1221, 1292], axis: 1133, half: 5, bottom: 1206, tagH: 12, tagL: 1122,
    panes: [[-222, 805], [805, 1002], [1002, 1206]],
    v: [84, 225, 363, 502, 641, 781, 919, 1057], h: seq(-210, 25.3, 40),
    times: '17:00 19:00 21:00 23:00 Jul_22 03:00 05:00 07:00', timeY: 1258,
    labels: prices(4016, 2, -160, 50.6, 19).concat([['5', 830], ['100K', 1048], ['0', 1185]]),
    texts: [[22, -187, 'EMA(ES 09-22 (15 Minute),9), EMA(ES 09-22 (15 Minute),21)'], [22, 840, 'MACD(ES 09-22 (15 Minute),12,26,9)'], [22, 1037, 'VOL(ES 09-22 (15 Minute))'], [22, 1165, '© 2022 NinjaTrader, LLC']],
    candles: '33,582,611,593,611,r;50,569,650,578,605,g;68,549,620,578,584,r;84,569,663,585,643,r;102,643,740,643,692,r;120,602,708,649,702,g;137,585,672,637,649,g;154,564,649,573,637,g;172,569,687,573,663,r;188,611,720,637,663,g;207,455,631,503,631,g;225,499,602,503,547,r;241,517,619,540,617,r;259,595,663,617,643,r;275,620,702,643,649,g;293,625,682,637,663,r;311,613,663,622,663,g;327,573,692,602,631,r;345,602,631,605,622,g;363,580,631,585,599,g;380,558,595,584,587,r;397,565,605,585,599,r;414,592,617,593,617,r;989,279,360,331,338,r;1005,200,345,219,338,g;1023,150,258,155,225,g;1040,-70,408,42,161,g;1057,-166,400,42,397,r;1075,232,587,251,397,g;1092,139,466,251,257,g;1110,168,391,251,320,r',
    lines: [
      ['gold', 1, '12,624 414,133', 0, .45], ['teal', 1, '12,248 414,671', 0, .5], ['teal', 1.4, '207,455 414,573', 0],
      ['turq', 1, '35,566 68,570 85,585 102,608 120,618 137,620 154,612 172,620 188,625 207,600 225,592 241,598 259,608 275,614 293,622 327,625 345,625 363,618 397,608 414,610', 0],
      ['turq', 1, '970,382 989,375 1005,345 1023,312 1040,253 1057,281 1075,276 1092,273', 0],
      ['gold', 1, '35,629 68,622 102,629 137,632 172,627 188,631 207,622 225,614 259,617 293,622 327,625 363,618 397,614 414,614', 0],
      ['gold', 1, '970,450 989,441 1005,420 1023,395 1040,363 1075,362 1092,349', 0],
      ['trend', 2, '970,438 1057,357', 0],
      ['red', 1, '35,820 68,838 102,856 137,874 172,888 188,894 225,899 259,905 293,916 345,924 397,932 414,933', 0],
      ['red', 1, '970,904 1005,894 1023,891 1040,883 1057,881 1075,880 1092,877', 0],
      ['teal', 1, '35,853 68,870 85,884 102,894 137,909 154,909 188,919 207,914 225,912 259,922 293,934 330,937 363,934 414,936', 0],
      ['teal', 1, '970,889 989,888 1005,880 1023,871 1040,853 1057,867 1075,871 1092,874', 0]],
    zeros: [950, 1184],
    bars: [[950, '35:986,50:986,68:986,85:986,102:990,120:990,137:986,154:978,172:978,188:978,207:966,225:963,241:963,259:966,275:966,293:970,311:966,327:963,345:960,363:957,380:955,397:955,989:940,1005:935,1023:929,1040:922,1057:940,1075:945,1092:947'],
      [1184, '519:1181,571:1181,589:1178,606:1175,624:1175,641:1178,658:1178,832:1178,850:1180,867:1176,885:1180,919:1180,937:1178,954:1175,971:1176,989:1180,1005:1167,1023:1163,1040:1016,1057:1025,1075:1066,1092:1101,1110:1132']],
    tags: [['gold', 348, '3996.00'], ['turq', 272, '3998.98'], ['black', 322, '3997.00'], ['red', 876, '3.08'], ['blue', 945, '0.162'], ['blue', 1132, '37961']]
  },
  B: {
    box: [-57, 92, 1222, 2863], axis: 1125, half: 4.5, bottom: 2777, tagH: 12, tagL: 1114, back: [1086, 154],
    panes: [[92, 1903], [1903, 2190], [2190, 2481], [2481, 2777]],
    v: [51, 213, 375, 537, 697, 858, 1020], h: seq(208, 168.4, 11).concat([2315]),
    times: '02:00 03:00 04:00 05:00 06:00 07:00 08:00', timeY: 2828,
    labels: prices(4010, 2, 209, 168.4, 10).concat([['', 1891], ['2', 1991], ['50000', 2221], ['40000', 2268], ['30000', 2317], ['20000', 2365], ['10000', 2414], ['80', 2534], ['60', 2599], ['20', 2720]]),
    texts: [[-47, 126, 'EMA(ES 09-22 (5 Minute),9), EMA(ES 09-22 (5 Minute),21)'], [-47, 1937, 'MACD(ES 09-22 (5 Minute),12,26,9)'], [-47, 2225, 'VOL(ES 09-22 (5 Minute))'], [-47, 2515, 'Stochastics(ES 09-22 (5 Minute),7,14,3)'], [-47, 2736, '© 2022 NinjaTrader, LLC']],
    candles: '-17,1893,1903,1903,1903,g;-3,1893,1903,1903,1903,g;11,1680,1903,1903,1903,r;24,1830,1903,1903,1903,r;38,1893,1903,1903,1903,r;64,1808,1903,1903,1903,r;78,1640,1892,1807,1892,g;92,1577,1807,1743,1807,g;105,1493,1788,1534,1764,g;118,1493,1724,1534,1660,r;131,1654,1892,1659,1892,r;145,1830,1903,1871,1903,r;185,1787,1903,1787,1903,g;200,1680,1829,1787,1807,r;213,1765,1903,1807,1903,r;226,1639,1903,1639,1903,g;239,1577,1890,1618,1764,r;254,1765,1903,1787,1903,r;267,1860,1903,1871,1890,g;280,1848,1903,1848,1880,r;293,1850,1903,1870,1903,g;306,1640,1900,1659,1871,g;320,1537,1680,1618,1659,g;333,1430,1680,1450,1618,g;347,1347,1493,1470,1471,g;360,1368,1618,1470,1595,r;375,1472,1788,1595,1724,r;388,1640,1903,1743,1828,r;401,1788,1903,1848,1890,r;414,1830,1903,1891,1892,r;428,1788,1903,1891,1892,r;441,1830,1893,1871,1891,g;455,1682,1892,1703,1891,g;468,1662,1892,1703,1807,r;482,1680,1892,1679,1807,g;496,1472,1723,1575,1679,g;509,1368,1640,1492,1575,g;522,1347,1555,1366,1492,g;536,1220,1450,1281,1346,g;549,1262,1597,1281,1535,r;562,1388,1555,1470,1535,g;575,1325,1535,1345,1451,g;588,1135,1388,1154,1366,g;603,1095,1262,1133,1155,g;616,1115,1408,1133,1346,r;629,1180,1408,1302,1346,g;642,1240,1492,1322,1387,r;657,1283,1535,1322,1407,g;670,1157,1388,1238,1346,g;683,1200,1368,1261,1282,r;697,1262,1430,1282,1366,r;711,1180,1408,1261,1366,g;724,1050,1303,1197,1262,g;737,903,1240,965,1218,g;750,947,1094,985,1029,r;765,735,1050,817,1050,g;778,735,925,755,818,g;791,293,1303,776,1239,r;804,92,1597,123,1239,g;819,92,505,123,376,r;832,92,1050,315,376,g;845,92,1050,315,840,r;858,800,1576,840,1554,r;872,1305,1903,1554,1555,r;886,1470,1903,1554,1903,r;899,1010,1903,1070,1903,g;912,695,1135,817,1093,g;925,797,1430,797,1282,r;940,1031,1788,1070,1282,g;953,800,1368,1070,1303,r;966,1135,1535,1281,1366,r;979,1200,1470,1302,1366,g',
    lines: [
      ['turq', 1, '100,1903 107,1863 120,1824 132,1838 147,1871 158,1903', 0],
      ['turq', 1, '182,1903 200,1875 213,1900 226,1855 239,1834 254,1853 267,1858 280,1878 293,1878 306,1850 322,1790 335,1720 348,1672 361,1658 375,1672 388,1700 402,1740 415,1772 428,1793 442,1810 455,1789 468,1793 482,1775 496,1740 510,1685 523,1620 537,1553 550,1550 562,1540 575,1505 590,1430 605,1370 616,1365 629,1353 645,1358 657,1355 670,1330 683,1320 697,1330 711,1315 724,1296 737,1230 751,1190 765,1120 780,1042 792,1080 805,890 819,790 833,695 845,720 858,870 872,1045 887,1218 899,1190 913,1115 926,1150 940,1135 953,1165 966,1205', 0],
      ['gold', 1, '302,1903 322,1865 335,1825 348,1793 361,1777 375,1772 388,1776 402,1790 415,1797 428,1806 442,1812 455,1804 468,1802 482,1793 496,1770 510,1745 523,1710 537,1672 550,1660 563,1645 577,1618 590,1565 603,1535 616,1520 630,1497 645,1488 658,1470 670,1452 683,1437 697,1432 711,1415 725,1397 738,1355 751,1327 765,1285 779,1235 792,1233 806,1128 820,1070 833,995 846,982 859,1032 873,1080 886,1162 899,1158 913,1125 927,1140 940,1138 953,1145 966,1167', 0],
      ['trend', 2, '490,1903 745,1568 858,1420', 0],
      ['teal', 1, '-30,540 0,512 12,501 38,494 65,482 92,462 107,443 120,438 132,446 147,459 160,471 173,476 200,473 213,482 226,474 240,474 254,479 267,485 280,491 293,493 306,485 320,477 347,453 361,453 388,473 415,496 442,507 455,505 468,507 482,505 496,498 510,489 523,475 537,459 562,462 575,457 590,440 605,433 630,436 645,443 670,444 683,444 697,453 724,453 738,441 751,437 765,425 779,412 792,427 806,384 820,370 833,350 846,370 858,415 873,460 886,508 899,505 913,491 926,501 940,501 953,509 966,525', R2],
      ['red', 1, '-30,532 0,527 25,519 65,507 92,494 107,485 120,473 132,466 147,465 160,467 200,471 254,471 293,481 333,480 347,474 375,467 388,467 415,477 442,488 482,497 510,495 537,485 562,475 575,473 590,464 616,454 645,449 670,446 711,450 738,450 765,440 779,434 792,434 820,412 833,401 846,395 858,398 873,410 886,430 899,444 913,453 926,465 940,469 953,477 966,487', R2],
      ['teal', 1, '-57,965 1121,965', R2], ['teal', 1, '-57,1151 1121,1151', R2],
      ['gold', 1, '-27,1085 -15,1070 -2,1015 11,1005 24,985 38,998 51,1004 65,1000 78,982 92,966 106,945 120,945 132,965 147,1030 160,1087 173,1115 200,1083 213,1098 226,1071 240,1069 254,1057 267,1098 281,1130 293,1118 306,1071 320,1010 333,944 348,944 361,964 375,1010 388,1060 402,1109 415,1133 428,1140 442,1138 455,1115 468,1107 482,1085 496,1063 510,1015 523,968 537,941 550,958 563,987 577,997 590,960 605,929 616,944 630,967 643,999 657,999 670,996 684,996 697,1021 711,1031 724,1024 738,979 751,962 765,946 779,941 792,999 806,990 820,1010 833,953 846,1010 858,1080 873,1150 887,1185 899,1145 913,1103 926,1074 940,1074 953,1095 966,1098', R2],
      ['blue', 1, '-27,1122 -15,1115 0,1095 25,1053 51,1021 78,998 106,981 120,976 132,973 147,976 160,989 173,1007 187,1029 200,1047 213,1068 226,1083 240,1088 254,1083 281,1085 293,1091 306,1086 320,1077 333,1060 348,1044 361,1024 375,1006 388,1001 402,1007 415,1024 428,1050 442,1080 455,1102 468,1115 482,1118 496,1112 510,1094 523,1068 550,1018 575,990 590,975 603,961 616,958 643,970 670,970 684,974 697,989 724,1010 738,1007 765,995 779,987 792,983 833,973 846,978 858,997 873,1032 886,1053 899,1075 913,1092 926,1107 940,1117 953,1118 966,1109', R2]],
    zeros: [2095, 2463],
    bars: [[527, '-17:515,-3:511,11:508,24:511,38:508,51:508,65:508,78:502,92:499,106:491,120:494,132:505,147:519,160:530,173:534,186:530,213:537,254:534,267:534,280:539,293:537,320:523,333:515,348:508,361:511,375:519,388:530,402:539,415:545,428:549,442:549,455:543,468:539,482:534,510:519,523:511,537:502,550:508,563:511,577:511,590:502,603:499,616:508,630:515,643:520,697:530,711:530,724:530,738:520,751:517,765:508,779:502,792:520,806:488,820:482,833:479,846:499,858:545,872:571,886:606,899:586,913:562,926:566,940:557,953:559,966:562', R2],
      [895, seq(-30, 13.45, 53).map((x, i) => x + ':' + (891 - i / 6)).join() + ',388:874,697:880,711:877,724:877,738:871,751:874,765:874,779:865,792:639,805:659,820:784,833:697,846:688,858:738,872:743,886:738,899:781,913:801,926:793,940:790,953:804,966:822,979:877', R2]],
    marks: [['mag', 858, 740, 782], ['mag', 980, 1142, 1184], ['blue', 980, 1530, 1487], ['blue', 858, 1636, 1592]],
    tris: [['mag', 975, 1262, 1], ['blue', 985, 1282, -1], ['mag', 864, 1348, -1], ['blue', 855, 1388, 1]],
    tags: [['turq', 1208, '3998.15'], ['gold', 1169, '3998.60'], ['black', 1303, '3997.00'], ['teal', 2094, '0.0597'], ['red', 2055, '0.756'], ['blue', 2131, '-0.696'], ['blue', 2444, '3960'], ['blue', 2675, ''], ['gold', 2665, '37.54']]
  },
  C: {
    box: [12, -206, 1294, 1289], axis: 1196, half: 5, bottom: 1203, tagH: 12, tagL: 1186, back: [1158, -142],
    panes: [[-206, 807], [807, 1000], [1000, 1203]],
    v: [172, 296, 419, 543, 665, 790, 912, 1035, 1159], h: seq(-201, 20.66, 49),
    times: '19:00 21:00 23:00 Jul_22 03:00 05:00 07:00 09:00 11:00', timeY: 1255,
    labels: prices(12700, 10, -157, 51.64, 19).concat([['0', 928], ['40000', 1049], ['20000', 1113], ['0', 1182]]),
    texts: [[22, -170, 'EMA(NQ 09-22 (15 Minute),9), EMA(NQ 09-22 (15 Minute),21), Trend lines(NQ 09-22 (15 Minute),false,3,30,5)'], [22, 843, 'MACD(NQ 09-22 (15 Minute),12,26,9)'], [22, 1035, 'VOL(NQ 09-22 (15 Minute))'], [22, 1162, '© 2022 NinjaTrader, LLC']],
    candles: '35,563,635,599,602,g;50,579,640,601,629,r;64,625,725,625,672,r;81,598,680,634,676,g;96,605,645,634,637,g;111,598,655,602,646,g;127,598,658,602,654,r;143,612,693,625,649,g;158,513,623,535,623,g;172,528,598,532,573,r;189,561,651,576,651,r;204,625,682,651,669,r;219,660,716,663,668,g;235,638,685,660,663,g;250,637,689,651,663,g;266,637,708,646,651,r;280,627,660,631,651,g;297,616,637,622,632,g;311,606,632,625,631,r;327,617,640,627,632,g;342,622,655,624,651,r;358,650,682,657,681,r;373,625,754,669,712,r;388,655,738,657,710,g;404,657,747,657,733,r;419,706,740,727,739,g;435,672,737,678,725,g;450,642,710,651,681,g;466,617,678,634,649,g;481,567,646,611,634,g;496,518,682,518,611,g;512,485,612,518,605,r;527,540,712,602,675,r;543,567,682,590,672,g;558,568,692,590,602,r;573,532,635,532,602,g;589,478,575,525,539,g;604,491,540,521,525,g;619,452,536,498,524,g;635,412,505,483,501,g;651,478,520,486,508,r;665,450,530,509,524,r;682,460,548,512,527,g;697,505,550,506,514,g;711,373,518,376,512,g;727,348,436,376,430,r;742,426,536,431,492,r;758,436,510,437,490,g;773,360,470,374,437,g;790,273,392,277,376,g;804,273,388,283,332,r;819,273,365,332,352,r;835,308,406,350,370,r;850,318,382,370,376,r;866,282,400,294,376,g;881,262,345,294,323,r;897,108,533,259,320,g;912,-148,478,257,466,r;927,347,655,408,463,g;943,312,608,410,431,r;958,347,560,434,480,r',
    lines: [
      ['teal', 1, '158,513 300,593', 0, .6], ['teal', 1, '300,593 650,806', 0, .35], ['gold', 1.2, '527,710 1191,82', 0], ['gold', 2, '373,753 1191,539', 0, .4], ['trend', 2, '373,755 1191,542', 0],
      ['turq', 1, '35,569 50,580 64,600 96,611 111,611 127,619 143,621 158,605 172,598 189,611 204,622 219,629 250,640 266,642 297,640 311,637 327,635 342,637 358,648 373,660 388,659 404,672 419,684 435,685 450,675 466,671 481,657 496,628 512,627 527,637 543,627 558,620 573,604 589,590 619,563 651,537 682,532 697,525 711,495 727,486 742,485 758,478 773,457 790,421 804,403 819,391 850,385 866,370 881,360 897,341 912,365 927,376 943,385', 0],
      ['gold', 1, '35,546 64,566 96,579 143,588 172,585 204,600 219,607 250,614 280,617 311,617 342,620 373,634 388,637 404,645 419,655 466,656 481,653 496,637 527,637 558,634 589,620 619,599 635,588 665,575 697,565 711,544 742,529 758,522 773,511 790,486 819,464 835,458 866,444 881,428 897,410 912,414 943,414', 0],
      ['teal', 1, '35,919 64,943 96,952 143,958 158,947 172,941 204,957 235,961 266,961 280,956 342,951 358,955 373,960 388,961 419,973 450,965 466,957 481,948 496,928 527,930 543,928 558,924 573,912 604,894 635,879 651,877 697,877 711,861 727,856 742,860 758,859 773,851 790,833 804,828 819,825 850,832 866,827 881,827 897,820 912,840 943,861', 0],
      ['red', 1, '35,860 64,887 96,909 127,926 143,933 172,935 204,941 235,949 280,955 342,953 388,955 419,962 450,964 481,960 512,947 558,938 589,927 619,915 635,905 665,896 697,889 727,877 773,869 790,859 819,848 866,839 897,833 912,833 943,843', 0]],
    zeros: [928, 1181],
    bars: [[928, '35:990,50:984,64:984,81:978,96:969,111:961,127:957,143:952,158:941,172:937,189:937,204:940,219:940,235:940,250:940,266:938,280:934,327:926,342:926,358:932,373:935,388:932,404:938,419:941,435:934,466:923,481:918,496:906,512:906,527:915,543:915,558:915,573:909,589:906,604:903,619:903,635:900,651:906,665:912,682:915,697:918,711:906,727:906,742:915,758:915,773:912,790:900,804:903,819:906,835:912,850:920,866:918,881:920,897:915,912:935,927:943,943:949'],
      [1181, '496:1173,512:1173,527:1175,543:1177,558:1173,573:1176,589:1176,635:1176,665:1178,711:1176,727:1176,742:1173,758:1177,773:1176,790:1173,804:1173,819:1173,835:1176,850:1177,866:1170,881:1164,897:1013,912:1034,927:1086,943:1098,958:1138']],
    tags: [['turq', 384, '12594.87'], ['gold', 415, '12589.03'], ['black', 482, '12576.25'], ['teal', 864, '8.42'], ['red', 843, '11.05'], ['blue', 949, '-2.63'], ['blue', 1138, '13320']]
  },
  D: {
    box: [19, 92, 1216, 2863], axis: 1118, half: 6.5, bottom: 2777, tagH: 12, tagL: 1108, back: [1080, 154],
    panes: [[92, 1903], [1903, 2190], [2190, 2481], [2481, 2777]],
    v: [68, 190, 314, 437, 560, 683, 806, 929, 1053], h: seq(96, 18.26, 99).concat([1918, 2150, 2290, 2745]),
    times: '04:00 04:30 05:00 05:30 06:00 06:30 07:00 07:30 08:00', timeY: 2828,
    labels: prices(12710, 10, 117, 91.2, 20).concat([['', 1918], ['5', 1998], ['0', 2073], ['20000', 2233], ['15000', 2291], ['10000', 2349], ['5000', 2407], ['70', 2529], ['60', 2601], ['50', 2673], ['40', 2747]]),
    texts: [[27, 126, 'EMA(NQ 09-22 (5 Minute),9), EMA(NQ 09-22 (5 Minute),21), Bollinger(NQ 09-22 (5 Minute),2.5,14)'], [27, 1937, 'MACD(NQ 09-22 (5 Minute),12,26,9)'], [27, 2225, 'VOL(NQ 09-22 (5 Minute))'], [27, 2515, 'RSI(NQ 09-22 (5 Minute),14,3)'], [27, 2736, '© 2022 NinjaTrader, LLC']],
    candles: '48,1117,1220,1160,1200,r;68,1160,1256,1197,1248,r;89,1234,1420,1250,1366,r;109,1328,1433,1354,1370,g;130,1338,1382,1348,1354,r;149,1300,1390,1348,1352,g;170,1308,1356,1325,1346,g;190,1238,1328,1255,1322,g;211,1232,1275,1247,1256,g;231,1210,1308,1223,1245,g;253,1120,1230,1145,1218,g;273,1052,1175,1112,1152,g;293,1050,1147,1052,1114,g;314,966,1103,974,1058,g;334,967,1160,985,1134,r;355,1088,1145,1116,1137,g;375,1060,1153,1072,1126,g;396,976,1082,1006,1070,g;416,966,1042,988,1007,g;437,976,1130,990,1107,r;458,1060,1147,1104,1115,r;477,1098,1185,1109,1145,r;498,1125,1202,1141,1144,g;519,1062,1160,1093,1142,g;540,1045,1110,1069,1094,g;560,1062,1160,1075,1152,r;580,1108,1190,1138,1148,g;601,1070,1166,1106,1146,g;621,981,1112,1006,1110,g;642,987,1094,1006,1056,r;662,946,1068,990,1056,g;683,970,1105,997,1058,r;703,997,1367,1052,1215,r;725,720,1433,753,1213,g;744,674,978,753,945,r;765,510,1157,602,942,g;785,220,1063,594,942,r;806,923,1330,939,1310,r;827,1245,1558,1305,1395,r;847,1372,1640,1392,1499,r;868,1093,1512,1206,1509,g;888,1034,1225,1104,1212,g;909,1100,1430,1104,1369,r;929,1203,1565,1249,1369,g;950,1098,1452,1252,1380,r;969,1254,1475,1369,1375,g;991,1288,1413,1337,1370,g',
    lines: [
      ['turq', 1, '50,1262 68,1260 89,1280 130,1305 150,1314 170,1317 190,1310 231,1283 253,1250 273,1215 293,1180 314,1150 345,1147 375,1128 396,1105 416,1080 437,1084 477,1103 498,1112 540,1101 560,1113 580,1117 601,1115 621,1098 662,1070 683,1067 703,1098 725,1028 744,1013 765,930 785,931 806,1000 827,1080 847,1170 868,1175 888,1165 909,1205 929,1215 950,1248 969,1271', 0],
      ['gold', 1, '50,1092 68,1081 96,1080 109,1085 150,1086 170,1088 190,1086 211,1094 231,1094 253,1068 273,1040 293,1005 314,938 334,928 375,898 396,872 416,853 437,870 458,896 498,930 519,946 540,947 560,944 580,946 601,978 621,962 642,956 662,934 683,948 704,957 725,808 744,792 765,627 785,619 806,595 828,555 847,502 868,499 909,499 929,510 969,530', 0],
      ['gold', 1, '50,1318 68,1313 89,1313 109,1310 130,1312 170,1308 190,1297 253,1260 293,1243 314,1230 355,1214 375,1194 396,1170 416,1143 437,1127 458,1113 498,1098 540,1084 560,1086 601,1100 621,1092 662,1080 683,1085 703,1102 725,1075 744,1062 765,1027 785,1010 806,1028 847,1074 868,1078 888,1080 909,1100 929,1118 950,1145 969,1168', 0],
      ['gold', 1, '50,1327 68,1319 109,1326 150,1330 190,1330 231,1311 253,1293 273,1275 293,1252 314,1230 355,1215 375,1200 396,1185 416,1167 458,1156 498,1156 540,1141 580,1143 621,1127 662,1107 683,1106 704,1114 725,1083 744,1070 765,1027 785,1018 806,1055 827,1090 847,1118 868,1127 888,1123 909,1145 929,1157 969,1192', 0],
      ['gold', 1, '50,1545 68,1542 89,1548 109,1535 130,1538 150,1535 170,1526 190,1505 211,1470 231,1448 253,1450 273,1464 293,1482 314,1520 355,1522 375,1496 396,1472 416,1436 437,1385 458,1328 498,1268 519,1232 540,1219 580,1236 601,1221 683,1221 704,1245 725,1340 744,1339 765,1423 785,1403 806,1460 830,1560 847,1648 868,1657 888,1658 909,1710 929,1730 950,1775 969,1807', 0],
      ['trend', 2, '19,1662 858,1568 1114,1535', 0],
      ['teal', 1, '50,398 68,401 89,420 130,450 150,458 170,464 190,459 211,456 231,447 253,432 273,417 293,400 314,375 334,380 355,380 375,377 396,370 416,360 458,381 498,407 519,411 540,413 560,426 580,435 601,440 621,430 642,430 662,420 683,428 704,450 725,408 744,404 765,351 785,358 806,415 827,475 847,537 868,545 888,537 909,566 929,569 950,592 969,606', R2],
      ['red', 1, '50,424 89,420 130,430 170,441 221,447 253,443 273,438 314,421 334,412 355,406 396,395 416,385 437,383 477,386 498,391 540,398 560,405 580,413 621,420 683,422 704,427 744,421 765,406 785,398 806,402 827,417 847,440 868,462 888,475 929,511 950,525 969,542', R2],
      ['teal', 1, '19,960 1114,960', R2],
      ['blue', 1, '50,1017 68,1047 89,1120 109,1111 130,1111 150,1108 170,1094 190,1054 211,1049 231,1034 253,995 273,982 293,955 314,930 334,1044 355,1039 375,1018 396,992 416,987 437,1062 458,1065 477,1085 498,1085 519,1057 540,1049 560,1100 580,1091 601,1074 621,1025 642,1056 662,1028 683,1066 704,1145 725,994 744,1060 765,993 785,1080 806,1153 827,1165 847,1185 868,1120 888,1103 909,1146 929,1127 950,1146 969,1144', R2],
      ['gold', 1, '50,1006 68,1028 89,1074 109,1091 130,1102 150,1105 170,1100 190,1077 211,1063 231,1047 253,1020 273,1002 293,978 314,955 334,1002 355,1018 375,1018 396,1008 416,996 437,1031 458,1047 477,1068 498,1076 519,1065 540,1057 560,1077 580,1085 601,1080 621,1051 642,1053 662,1039 683,1053 704,1100 725,1048 744,1053 765,1021 785,1056 806,1103 827,1133 847,1158 868,1141 888,1121 909,1135 929,1129 950,1137 969,1140', R2]],
    zeros: [2072, 2463],
    bars: [[504, '48:479,68:488,89:508,109:519,130:528,150:531,171:531,190:523,211:515,231:508,253:497,273:485,293:476,314:462,334:473,355:482,375:485,396:482,416:479,437:494,477:517,498:525,519:525,540:522,560:528,580:531,601:531,621:517,642:514,662:508,683:511,704:528,725:491,744:488,765:453,785:470,806:526,827:566,847:603,868:589,888:566,909:578,929:566,950:571,969:571', R2],
      [895, '48:891,68:891,89:874,109:886,130:891,150:889,171:891,190:889,211:886,231:891,253:886,273:886,293:889,314:883,334:883,355:889,375:891,396:883,416:889,437:883,458:889,477:886,498:889,519:889,540:889,560:886,580:883,601:883,621:880,642:883,662:880,684:868,704:639,725:674,744:790,765:706,785:688,806:781,827:772,847:778,868:807,888:810,909:790,929:796,950:825,969:828,991:883', R2]],
    marks: [['mag', 766, 453, 497], ['mag', 785, 163, 207], ['blue', 766, 1214, 1170], ['blue', 785, 1120, 1077]],
    tris: [['mag', 781, 514, 1], ['mag', 762, 597, 1], ['blue', 790, 528, -1], ['blue', 769, 583, -1]],
    cross: [471, 1772, '05:40'],
    tags: [['gold', 530, '12664.72'], ['gold', 1192, '12591.99'], ['gold', 1170, '12594.71'], ['turq', 1271, '12583.43'], ['black', 1338, '12576.25'], ['gold', 1807, '12524.71'], ['grey', 1771, '12528.50'], ['red', 2110, '-2.29'], ['teal', 2170, '-6.4'], ['blue', 2139, '-4.11'], ['blue', 2449, '1162'], ['gold', 2708, '45.29']]
  },
  E: {
    box: [-576, 114, 1161, 2788], axis: 1052, half: 8, bottom: 2679, tagH: 14, tagL: 1039,
    panes: [[114, 2186], [2186, 2679]],
    v: [-507, -386, -268, -150, -29, 90, 210, 329, 448, 568, 686, 806, 925], h: seq(140, 86.9, 24).concat([2303, 2636]),
    times: '06:35 06:38 06:42 06:45 06:48 06:51 06:52 06:59 07:05 07:11 07:20 07:27 07:35', timeY: 2744,
    labels: [['', 140]].concat(prices(4012, 1, 228, 86.9, 23), [['', 2193], ['2', 2304], ['-2', 2529], ['-4', 2638]]),
    texts: [[-565, 158, 'Tick counter(ES 09-22 (15 Range),true,false), EMA(ES 09-22 (15 Range),21), EMA(ES 09-22 (15 Range),9)'], [-565, 2229, 'MACD(ES 09-22 (15 Range),12,26,9)'], [-565, 2628, '© 2022 NinjaTrader, LLC'], [1025, 2128, 'Tick Counter only works on bars built with a set number of ticks', 'end']],
    candles: '-529,1011,1335,1076,1334,r;-507,1226,1552,1355,1552,r;-482,1400,1727,1572,1726,r;-458,1507,1836,1507,1748,g;-435,1180,1508,1180,1487,g;-411,836,1160,836,1160,g;-386,618,947,618,815,g;-363,445,771,597,771,r;-339,509,838,509,794,g;-315,185,511,488,510,r;-292,269,598,269,531,g;-268,227,553,248,553,r;-243,379,708,379,575,g;-220,335,664,336,358,g;-196,227,553,314,553,r;-172,445,771,575,771,r;-149,772,1099,793,1098,r;-125,923,1248,923,1119,g;-101,642,968,902,968,r;-78,814,1142,814,989,g;-53,793,1120,793,1120,r;-29,945,1270,945,1141,g;-6,815,1141,923,1141,r;18,858,1184,858,1160,g;42,531,858,531,836,g;65,248,577,248,510,g;89,114,337,114,227,g;115,114,185,114,185,r;139,185,512,205,510,r;161,530,858,530,858,r;185,574,903,574,880,g;210,553,881,553,881,r;233,685,1011,901,1011,r;257,945,1270,945,1033,g;281,858,1182,923,1181,r;304,1077,1399,1202,1399,r;328,1378,1703,1420,1703,r;353,1683,2008,1725,2008,r;376,1943,2186,1943,2031,g;400,1616,1944,1616,1921,g;425,1530,1857,1595,1857,r;447,1704,2031,1878,2031,r;471,1900,2186,2052,2186,r;496,2117,2186,2117,2186,g;519,1880,2186,2095,2186,r;542,1964,2186,1964,2186,g;567,1659,1988,1659,1943,g;590,1420,1748,1420,1640,g;614,1158,1487,1158,1399,g;638,923,1248,1140,1247,r;662,945,1270,945,1268,g;686,903,1225,923,1225,r;711,1246,1574,1246,1574,r;735,1333,1662,1333,1595,g;757,1120,1443,1311,1442,r;782,1313,1640,1464,1640,r;806,1552,1878,1660,1878,r;829,1703,2032,1703,1900,g;853,1376,1704,1376,1682,g;877,1180,1510,1180,1355,g;900,1011,1335,1159,1335,r;925,1269,1595,1355,1595,r;949,1398,1727,1398,1615,g;971,1356,1682,1376,1682,r;996,1441,1770,1441,1703,g;1020,1420,1703,1420,1529,r',
    lines: [
      ['gold', 1.2, '-529,1334 -507,1352 -481,1386 -457,1396 -435,1380 -410,1330 -385,1265 -363,1218 -339,1155 -315,1098 -291,1022 -268,982 -243,928 -220,870 -196,842 -172,838 -149,858 -101,874 -77,872 -53,890 -29,895 -6,918 18,915 42,880 65,825 91,747 115,697 139,682 161,696 185,686 210,703 233,733 257,750 282,790 304,842 328,920 352,1020 376,1105 400,1152 427,1222 450,1300 472,1372 496,1440 519,1513 544,1552 567,1562 590,1550 614,1516 640,1490 662,1440 686,1423 711,1436 735,1426 757,1428 782,1446 806,1488 829,1504 853,1496 877,1468 900,1456 925,1468 949,1463 971,1483 996,1481', 0],
      ['sky', 1.2, '-529,1076 -507,1170 -481,1278 -457,1324 -435,1300 -410,1200 -385,1085 -363,1022 -339,930 -315,845 -291,725 -268,695 -243,635 -220,573 -196,569 -172,608 -149,708 -101,795 -77,798 -53,860 -29,880 -6,932 18,918 42,850 65,725 91,580 115,500 139,502 161,574 185,577 210,635 233,710 257,755 282,840 304,950 328,1100 352,1270 376,1417 400,1458 425,1535 433,1568 447,1640 472,1755 496,1825 519,1900 544,1916 567,1870 590,1785 614,1655 640,1568 662,1445 686,1404 711,1438 735,1418 757,1420 782,1465 806,1550 829,1583 853,1540 877,1465 900,1444 925,1472 949,1460 971,1505 996,1492', 0],
      ['trend', 2, '-355,2186 0,1917 353,1652', 0],
      ['teal', 1, '-529,650 -507,690 -481,732 -457,750 -435,750 -410,737 -385,715 -363,708 -339,690 -291,655 -243,648 -220,645 -196,655 -172,678 -149,710 -125,733 -101,750 -78,757 -53,783 -29,795 -6,811 18,811 43,795 65,772 90,737 115,721 139,728 161,752 185,758 210,778 233,803 257,818 281,843 304,872 328,912 352,958 376,990 400,997 425,1012 448,1030 472,1055 496,1062 519,1073 544,1066 568,1040 592,1005 615,968 640,938 662,898 686,884 711,888 735,878 757,878 782,884 806,902 829,906 853,892 877,871 900,862 925,871 949,862 971,873 996,867', R2],
      ['red', 1, '-529,650 -507,662 -481,680 -457,693 -435,702 -410,708 -385,710 -339,704 -315,700 -291,688 -243,675 -196,668 -172,668 -149,675 -125,686 -101,698 -78,713 -53,725 -6,755 18,765 43,772 65,772 90,766 139,751 161,750 210,757 233,769 257,775 281,788 304,807 328,830 352,853 376,882 400,905 425,925 448,946 472,968 496,986 519,1005 544,1014 568,1021 592,1019 640,996 662,974 686,957 711,943 757,922 782,914 806,910 853,907 877,900 900,892 925,888 949,881 996,877', R2]],
    zeros: [2415],
    bars: [[847, '-528:856,-506:881,-481:906,-457:910,-434:899,-410:877,-385:852,-339:830,-314:824,-291:813,-268:820,-242:824,-220:824,-196:837,-171:856,-149:881,-124:890,-100:899,-77:895,-53:902,-28:899,-6:906,18:895,43:873,90:824,115:816,139:828,161:852,186:856,210:870,233:885,258:888,282:902,305:913,329:931,353:954,376:957,400:940,425:931,447:931,472:931,496:924,519:917,544:895,568:870,590:837,615:809,640:796,662:773,686:773,711:791,735:796,758:804,782:820,806:841,853:834,878:820,900:820,925:830,949:830,971:841,996:837', R2]],
    marks: [['mag', -6, 743, 797], ['mag', -28, 875, 928], ['mag', 711, 1176, 1229], ['mag', 783, 1241, 1295], ['blue', -6, 1216, 1162], ['blue', -28, 1343, 1289], ['blue', 687, 1299, 1246], ['blue', 807, 1952, 1899]],
    tris: [['mag', -12, 902, 1], ['mag', -23, 1248, -1], ['mag', 717, 1336, -1], ['mag', 778, 1466, 1], ['blue', -33, 1160, 1], ['blue', 681, 1206, 1], ['blue', 2, 945, -1], ['blue', 812, 1684, -1]],
    tags: [['gold', 1476, ''], ['sky', 1488, '3997.46'], ['black', 1531, '3997.00'], ['red', 2445, '-0.54'], ['blue', 2404, '0.178']]
  }
};

function draw(svg) {
  const c = CHARTS[svg.dataset.chart];
  const W = svg.clientWidth, H = svg.clientHeight;
  const fs = parseFloat(getComputedStyle(svg).fontSize);
  const [u0, v0, u1, v1] = c.box;
  const X = u => +((u - u0) / (u1 - u0) * W).toFixed(1);
  const Y = v => +((v - v0) / (v1 - v0) * H).toFixed(1);
  const mid = fs * 0.36;
  const o = [];
  const line = (xa, ya, xb, yb, col, w = 1) => o.push(`<path d="M${xa} ${ya}L${xb} ${yb}" stroke="${col}" stroke-width="${w}"/>`);
  const ax = X(c.axis), bot = Y(c.bottom);

  c.h.forEach(v => v < c.bottom && line(0, Y(v), ax, Y(v), '#2e2e2e'));
  c.v.forEach(u => line(X(u), 0, X(u), bot, '#2e2e2e'));
  (c.zeros || []).forEach(v => line(0, Y(v), X(c.tagL), Y(v), '#999'));
  (c.bars || []).forEach(([z, s, dy = 0]) => s.split(',').forEach(p => {
    const [x, y] = p.split(':').map(Number);
    line(X(x), Y(z + dy), X(x), Y(y + dy), C.blue, fs > 8 ? 1.6 : 1.3);
  }));
  c.candles.split(';').forEach(s => {
    const p = s.split(','), [x, hi, lo, t, b] = p.map(Number);
    line(X(x), Y(hi), X(x), Y(lo), '#ccc', 0.8);
    if (t < c.panes[0][1]) {
      const w = X(x + c.half) - X(x - c.half);
      o.push(`<rect x="${X(x - c.half)}" y="${Y(t)}" width="${w.toFixed(1)}" height="${Math.max(0.6, Y(b) - Y(t)).toFixed(1)}" fill="${C[p[5]]}" stroke="#ccc" stroke-width=".7"/>`);
    }
  });
  c.lines.forEach(([col, w, pts, dy, op = 0.85]) => o.push(`<polyline points="${pts.split(' ').map(p => { const [x, y] = p.split(',').map(Number); return X(x) + ',' + Y(y + dy); }).join(' ')}" fill="none" stroke="${C[col]}" stroke-width="${w}" opacity="${op}"/>`));
  (c.marks || []).forEach(([col, u, a, b]) => {
    const x = X(u), d = b > a ? -1 : 1, y = Y(b), k = fs / 3;
    o.push(`<path d="M${x} ${y}l${-k} ${k * d * 1.5}h${k * 2}z" fill="${C[col]}"/>`);
    line(x, Y(a), x, y + k * d, C[col], k);
  });
  (c.tris || []).forEach(([col, u, v, d]) => { const k = fs / 2.6; o.push(`<path d="M${X(u) - d * k / 2} ${Y(v) - k}l${d * k} ${k}l${-d * k} ${k}z" fill="${C[col]}"/>`); });
  if (c.cross) {
    line(X(c.cross[0]), 0, X(c.cross[0]), bot, '#ccc');
    line(0, Y(c.cross[1]), ax, Y(c.cross[1]), '#ccc');
  }
  c.panes.forEach(([, b], i) => line(0, Y(b), i === c.panes.length - 1 ? ax : W, Y(b), '#ccc'));
  line(ax, 0, ax, bot, '#ccc');
  c.texts.forEach(([u, v, t, a = 'start']) => o.push(`<text x="${X(u)}" y="${Y(v) + mid}" text-anchor="${a}">${t}</text>`));
  c.labels.forEach(([t, v]) => {
    line(ax, Y(v) - 0.5, ax + 4, Y(v) - 0.5, '#ccc');
    o.push(`<text x="${ax + 6}" y="${Y(v) + mid}">${t}</text>`);
  });
  c.times.split(' ').forEach((t, i) => {
    line(X(c.v[i]), bot, X(c.v[i]), bot + 4, '#ccc');
    o.push(`<text x="${X(c.v[i])}" y="${Y(c.timeY) + mid}" text-anchor="middle">${t.replace('_', ' ')}</text>`);
  });
  c.tags.forEach(([col, v, t]) => {
    const x = X(c.tagL), y = Y(v), h = c.tagH / 2;
    const dark = ['gold', 'turq', 'sky'].includes(col);
    o.push(`<path d="M${x} ${y}L${x + 4} ${y - h}H${W - 0.5}V${y + h}H${x + 4}z" fill="${C[col]}" stroke="#ccc"/><text class="${dark ? 'tag-dark' : 'tag-light'}" x="${ax + 6}" y="${y + mid}">${t}</text>`);
  });
  if (c.cross) o.push(`<rect x="${X(c.cross[0]) - 12}" y="${Y(c.timeY) - 7}" width="24" height="14" fill="#3f3f45" stroke="#ccc"/><text class="tag-light" x="${X(c.cross[0])}" y="${Y(c.timeY) + mid}" text-anchor="middle">${c.cross[2]}</text>`);
  if (c.back) { const x = X(c.back[0]), y = Y(c.back[1]); o.push(`<path d="M${x + 6} ${y}H${x - 6}M${x - 1} ${y - 5}l-5 5 5 5" fill="none" stroke="#ddd" stroke-width="1.500"/>`); }
  svg.innerHTML = o.join('');
}
const drawAll = () => all('[data-chart]', draw);
drawAll();
window.addEventListener('resize', drawAll);
```
